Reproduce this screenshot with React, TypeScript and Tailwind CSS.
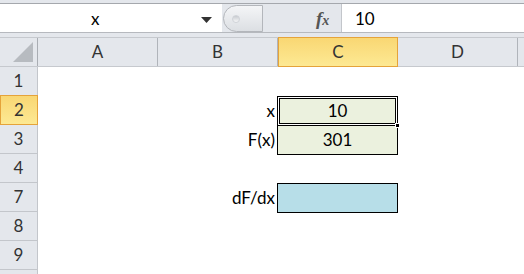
const font = { fontFamily: 'Lato, "Open Sans", sans-serif' };

const cols = ['A', 'B', 'C', 'D'];

type Row = { n: string; label?: string; cell?: 'x' | 'f' | 'd' };

const rows: Row[] = [
  { n: '1' },
  { n: '2', label: 'x', cell: 'x' },
  { n: '3', label: 'F(x)', cell: 'f' },
  { n: '4' },
  { n: '7', label: 'dF/dx', cell: 'd' },
  { n: '8' },
  { n: '9' },
  { n: '' },
];

const ValueCell = ({ kind }: { kind?: Row['cell'] }) => {
  if (kind === 'x') {
    return (
      <div className="relative w-[121px] h-[30px] -mb-px -ml-px border border-black p-px bg-white z-10">
        <div className="w-full h-full border border-black bg-[#ebf1de] flex items-center justify-center text-[17px] text-black">10</div>
        <div className="absolute -right-[3px] -bottom-[3px] w-[5px] h-[5px] bg-black border border-white" />
      </div>
    );
  }
  if (kind === 'f') {
    return (
      <div className="w-[121px] h-[30px] -ml-px border border-black bg-[#ebf1de] flex items-center justify-center text-[17px] text-black">301</div>
    );
  }
  if (kind === 'd') {
    return <div className="w-[121px] h-[30px] -ml-px border border-black bg-[#b7dee8]" />;
  }
  return <div className="w-[120px] h-[29px]" />;
};

export default function App() {
  return (
    <div className="w-[524px] h-[274px] overflow-hidden bg-white select-none" style={font}>
      {/* formula bar */}
      <div className="h-[37px] bg-[#e4e7ec] flex flex-col">
        <div className="h-[4px] bg-[#e4e7ec] border-b border-[#a5a8ad]" />
        <div className="h-[29px] flex border-b border-[#b6b9be]">
          <div className="w-[222px] bg-white flex items-center relative">
            <span className="absolute left-[91px] text-[17px] text-black leading-none">x</span>
            <svg className="absolute left-[201px] top-[13px]" width="11" height="6" viewBox="0 0 11 6">
              <path d="M0 0 H11 L5.5 6 Z" fill="#333" />
            </svg>
          </div>
          <div className="w-[120px] flex items-center relative bg-[#e4e7ec] border-r border-[#c3c6cb]">
            <div className="absolute left-[1px] top-[1px] w-[40px] h-[27px] rounded-l-full border border-[#b3b6bb] bg-gradient-to-b from-[#f4f5f7] to-[#dcdfe3] flex items-center pl-[8px]">
              <div className="w-[8px] h-[8px] rounded-full bg-gradient-to-b from-[#c8cbd0] to-[#f6f7f8] border border-[#d0d3d8]" />
            </div>
            <span className="absolute left-[94px] text-[19px] italic font-bold text-[#555] leading-none" style={{ fontFamily: '"Liberation Serif", serif' }}>
              f<span className="text-[14px]">x</span>
            </span>
          </div>
          <div className="flex-1 bg-white flex items-center pl-[13px] text-[17px] text-black leading-none">10</div>
        </div>
        <div className="h-[3px] bg-[#e4e7ec]" />
      </div>

      {/* column headers */}
      <div className="flex h-[30px] bg-[#e4e7ec] border-t border-[#c6c9ce] border-b border-[#9ea2a8]">
        <div className="w-[38px] border-r border-[#a9adb3] relative">
          <svg className="absolute right-[4px] bottom-[4px]" width="20" height="20" viewBox="0 0 20 20">
            <path d="M20 0 V20 H0 Z" fill="#b7bbc0" />
          </svg>
        </div>
        {cols.map(c => (
          <div
            key={c}
            className={
              c === 'C'
                ? 'w-[120px] flex items-center justify-center text-[17px] text-[#333] bg-gradient-to-b from-[#f9d773] to-[#fde993] border border-[#e5a33a] -my-px'
                : 'w-[120px] flex items-center justify-center text-[17px] text-[#333] border-r border-[#b0b4ba]'
            }
          >
            {c}
          </div>
        ))}
        <div className="flex-1" />
      </div>

      {/* grid body */}
      {rows.map((r, i) => (
        <div key={i} className="flex h-[29px]">
          <div
            className={
              r.n === '2'
                ? 'w-[38px] shrink-0 flex items-center justify-center text-[17px] text-[#333] bg-gradient-to-b from-[#f9d773] to-[#fde993] border border-[#e5a33a] -mt-px h-[30px]'
                : 'w-[38px] shrink-0 flex items-center justify-center text-[17px] text-[#333] bg-[#e4e7ec] border-r border-[#a9adb3] border-b border-[#c3c6cb]'
            }
          >
            {r.n}
          </div>
          <div className="w-[120px]" />
          <div className="w-[120px] flex items-center justify-end pr-[3px] text-[17px] text-black">{r.label}</div>
          <ValueCell kind={r.cell} />
          <div className="flex-1" />
        </div>
      ))}
    </div>
  );
}
